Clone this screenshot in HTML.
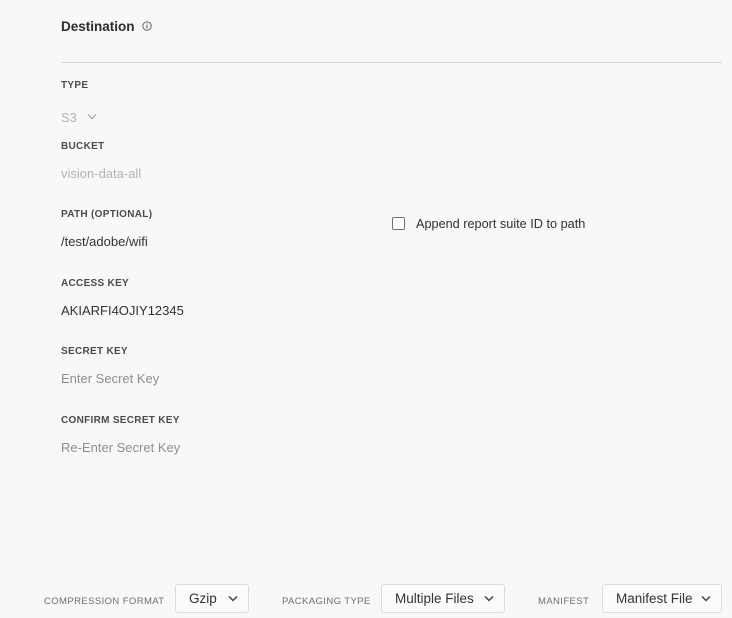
<!DOCTYPE html>
<html><head><meta charset="utf-8"><style>
body{margin:0;width:732px;height:618px;background:#f8f8f8;font-family:"Liberation Sans",sans-serif;position:relative;overflow:hidden;color:#323232}
.a{position:absolute;white-space:nowrap;line-height:1}
.lbl{font-size:10px;font-weight:bold;color:#4b4b4b;letter-spacing:.3px}
.val{font-size:13px;color:#323232}
.ph{font-size:13px;color:#8e8e8e}
.dis{font-size:13px;color:#b3b3b3}
.bl{font-size:9.5px;color:#6e6e6e;letter-spacing:.4px}
.box{position:absolute;top:584px;height:29px;border:1px solid #dcdcdc;border-radius:3px;background:#fbfbfb;box-sizing:border-box;font-size:13.5px;color:#323232;line-height:27px;padding-left:13px}
.box svg{position:absolute;right:10px;top:10px}
</style></head><body>
<div class="a" style="left:61px;top:20px;font-size:13.5px;font-weight:bold;color:#2c2c2c">Destination</div>
<svg class="a" style="left:142px;top:21px" width="10" height="10" viewBox="0 0 10 10"><circle cx="5" cy="5" r="4.2" fill="none" stroke="#555" stroke-width="0.9"/><rect x="4.5" y="4" width="1" height="3.3" fill="#555"/><rect x="4.5" y="2.4" width="1" height="1" fill="#555"/></svg>
<div class="a" style="left:61px;top:62px;width:661px;height:1px;background:#d6d6d6"></div>
<div class="a lbl" style="left:61px;top:81px">TYPE</div>
<div class="a dis" style="left:61px;top:111px">S3</div>
<svg class="a" style="left:87px;top:113px" width="10" height="7"><path d="M1 1.5L5 5.5L9 1.5" fill="none" stroke="#b3b3b3" stroke-width="1.5"/></svg>
<div class="a lbl" style="left:61px;top:142px">BUCKET</div>
<div class="a dis" style="left:61px;top:167px">vision-data-all</div>
<div class="a lbl" style="left:61px;top:210px">PATH (OPTIONAL)</div>
<div class="a val" style="left:61px;top:235px">/test/adobe/wifi</div>
<div class="a" style="left:392px;top:217px;width:13px;height:13px;border:1.5px solid #707070;border-radius:2px;box-sizing:border-box;background:#fff"></div>
<div class="a val" style="left:416px;top:218px;font-size:12.7px">Append report suite ID to path</div>
<div class="a lbl" style="left:61px;top:279px">ACCESS KEY</div>
<div class="a val" style="left:61px;top:304px">AKIARFI4OJIY12345</div>
<div class="a lbl" style="left:61px;top:347px">SECRET KEY</div>
<div class="a ph" style="left:61px;top:372px">Enter Secret Key</div>
<div class="a lbl" style="left:61px;top:416px">CONFIRM SECRET KEY</div>
<div class="a ph" style="left:61px;top:441px">Re-Enter Secret Key</div>
<div class="a bl" style="left:44px;top:597px">COMPRESSION FORMAT</div>
<div class="box" style="left:175px;width:74px">Gzip<svg width="10" height="7"><path d="M1 1.5L5 5.5L9 1.5" fill="none" stroke="#444" stroke-width="1.5"/></svg></div>
<div class="a bl" style="left:282px;top:597px">PACKAGING TYPE</div>
<div class="box" style="left:381px;width:124px">Multiple Files<svg width="10" height="7"><path d="M1 1.5L5 5.5L9 1.5" fill="none" stroke="#444" stroke-width="1.5"/></svg></div>
<div class="a bl" style="left:538px;top:597px">MANIFEST</div>
<div class="box" style="left:602px;width:120px">Manifest File<svg width="10" height="7"><path d="M1 1.5L5 5.5L9 1.5" fill="none" stroke="#444" stroke-width="1.5"/></svg></div>
</body></html>
